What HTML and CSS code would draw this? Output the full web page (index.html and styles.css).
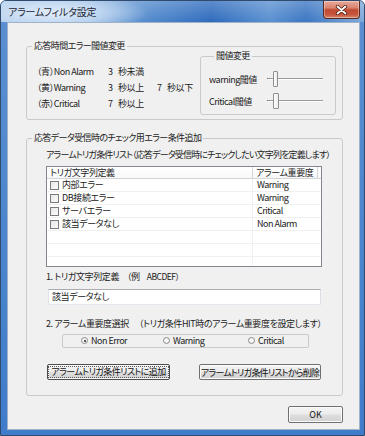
FILE: index.html
```html
<!DOCTYPE html>
<html lang="ja">
<head>
<meta charset="utf-8">
<title>アラームフィルタ設定</title>
<link rel="stylesheet" href="styles.css">
</head>
<body>
<div class="window">
  <div class="titlebar">
    <span class="title">アラームフィルタ設定</span>
    <div class="close">
      <svg width="13" height="10" viewBox="0 0 13 10"><path d="M2.5 1.5 L10.5 8.5 M10.5 1.5 L2.5 8.5" stroke="#4a1c12" stroke-width="3.4" stroke-linecap="round"/><path d="M2.5 1.5 L10.5 8.5 M10.5 1.5 L2.5 8.5" stroke="#ffffff" stroke-width="1.8" stroke-linecap="round"/></svg>
    </div>
  </div>
  <div class="client">
    <fieldset class="grp grp1">
      <legend>応答時間エラー閾値変更</legend>
      <div class="g1body">
        <div class="thresholds">
          <span>（青）<span class="en">Non Alarm</span></span><span>3</span><span>秒未満</span><span></span><span></span>
          <span>（黄）<span class="en">Warning</span></span><span>3</span><span>秒以上</span><span>7</span><span>秒以下</span>
          <span>（赤）<span class="en">Critical</span></span><span>7</span><span>秒以上</span><span></span><span></span>
        </div>
        <fieldset class="grp grp-inner">
          <legend>閾値変更</legend>
          <div class="srow first">
            <span class="slabel"><span class="en">warning</span>閾値</span>
            <div class="slider"><span class="tick"></span><span class="track"></span><span class="thumb"></span></div>
          </div>
          <div class="srow">
            <span class="slabel"><span class="en">Critical</span>閾値</span>
            <div class="slider"><span class="tick wide"></span><span class="track"></span><span class="thumb t2"></span></div>
          </div>
        </fieldset>
      </div>
    </fieldset>

    <fieldset class="grp grp2">
      <legend>応答データ受信時のチェック用エラー条件追加</legend>
      <div class="g2body">
        <div class="line listlabel">アラームトリガ条件リスト（応答データ受信時にチェックしたい文字列を定義します）</div>
        <div class="listview">
          <div class="lhead">
            <span class="hc">トリガ文字列定義</span><span class="hc">アラーム重要度</span><span class="hfill"></span>
          </div>
          <div class="lrow"><span class="c1"><i class="cb"></i>内部エラー</span><span class="c2 en">Warning</span><span></span></div>
          <div class="lrow"><span class="c1"><i class="cb"></i>DB接続エラー</span><span class="c2 en">Warning</span><span></span></div>
          <div class="lrow"><span class="c1"><i class="cb"></i>サーバエラー</span><span class="c2 en">Critical</span><span></span></div>
          <div class="lrow"><span class="c1"><i class="cb"></i>該当データなし</span><span class="c2 en">Non Alarm</span><span></span></div>
          <div class="lrow"><span class="c1"></span><span class="c2"></span><span></span></div>
          <div class="lrow"><span class="c1"></span><span class="c2"></span><span></span></div>
          <div class="lrow"><span class="c1"></span><span class="c2"></span><span></span></div>
        </div>
        <div class="line lbl1">1. トリガ文字列定義<span class="ex1">（例</span><span class="ex2 en">ABCDEF）</span></div>
        <div class="textbox">該当データなし</div>
        <div class="line lbl2">2. アラーム重要度選択<span class="ex3">（トリガ条件HIT時のアラーム重要度を設定します）</span></div>
        <div class="radiobox">
          <label class="radio r1"><i class="rb on"></i><span class="en">Non Error</span></label>
          <label class="radio r2"><i class="rb"></i><span class="en">Warning</span></label>
          <label class="radio r3"><i class="rb"></i><span class="en">Critical</span></label>
        </div>
        <div class="btnrow">
          <button class="btn default"><span class="focus">アラームトリガ条件リストに追加</span></button>
          <button class="btn del">アラームトリガ条件リストから削除</button>
        </div>
      </div>
    </fieldset>

    <div class="okrow"><button class="btn ok">OK</button></div>
  </div>
</div>
</body>
</html>
```

FILE: styles.css
```css
html, body {
  margin: 0;
  padding: 0;
  background: #ffffff;
}
body {
  font-family: "Noto Sans CJK JP", "Liberation Sans", sans-serif;
  font-size: 9px;
  font-feature-settings: "palt";
  letter-spacing: -0.4px;
  color: #222222;
}
.en {
  letter-spacing: -0.5px;
}

.window {
  width: 365px;
  height: 436px;
  box-sizing: border-box;
  border: 1px solid #2f4a6c;
  border-radius: 6px 6px 0 0;
  background: linear-gradient(180deg, #5b90d2 0%, #4a84cd 60%, #3f7cca 100%);
  display: flex;
  flex-direction: column;
  overflow: hidden;
}

.titlebar {
  height: 21px;
  flex: none;
  display: flex;
  justify-content: space-between;
  align-items: flex-start;
  padding-left: 7px;
  background:
    radial-gradient(ellipse 95px 20px at 52px 12px, rgba(228,239,251,0.95) 0%, rgba(205,224,245,0.7) 55%, rgba(205,224,245,0) 100%),
    linear-gradient(180deg, rgba(255,255,255,0.22) 0%, rgba(255,255,255,0) 100%),
    linear-gradient(90deg, #a9c7e9 0%, #8db4e1 22%, #4f87cb 42%, #2f6bbd 58%, #5a90d0 74%, #3c76c3 84%, #7faadb 100%);
}
.title {
  font-size: 10px;
  line-height: 22px;
  color: #1d2633;
  letter-spacing: -0.2px;
}
.close {
  width: 37px;
  height: 18px;
  margin-right: 4px;
  box-sizing: border-box;
  border: 1px solid #5b2a23;
  border-top: none;
  border-radius: 0 0 4px 4px;
  background: linear-gradient(180deg, #e7a99b 0%, #d98571 40%, #c24a33 52%, #c4563d 80%, #d98a6d 100%);
  box-shadow: inset 0 0 0 1px rgba(255,255,255,0.35);
  display: flex;
  align-items: center;
  justify-content: center;
}
.close svg { display: block; }

.client {
  flex: 1;
  margin: 0 4px 5px 6px;
  background: #f0f0f0;
  border: 1px solid #9fb2c7;
  padding: 0 16px 0 18px;
  display: flex;
  flex-direction: column;
}

/* group boxes */
.grp {
  margin: 0;
  padding: 0;
  border: 1px solid #cacaca;
  border-radius: 3px;
  min-width: 0;
}
.grp > legend {
  padding: 0 2px;
  margin-left: 5px;
  line-height: 12px;
  font-size: 9px;
  letter-spacing: -0.6px;
}

.grp1 {
  margin-top: 17px;
  padding-bottom: 4px;
}
.g1body {
  display: flex;
  align-items: flex-start;
  padding-left: 10px;
}
.thresholds {
  display: grid;
  grid-template-columns: 71px 10px 39px 10px auto;
  line-height: 16px;
  margin-top: 12px;
  white-space: nowrap;
}
.grp-inner {
  margin: -2px 6px 0 auto;
  width: 136px;
  box-sizing: border-box;
  padding: 0 0 2px 8px;
}
.srow {
  display: flex;
  align-items: center;
  height: 22px;
}
.srow.first { margin-top: 6px; }
.slabel {
  width: 58px;
  flex: none;
  white-space: nowrap;
}
.slider {
  position: relative;
  width: 56px;
  height: 22px;
}
.track {
  position: absolute;
  left: 1px;
  right: 0;
  top: 10px;
  height: 1px;
  background: #9a9a9a;
  box-shadow: 0 1px 0 #ffffff;
}
.tick {
  position: absolute;
  left: 0;
  top: 10px;
  width: 1px;
  height: 1px;
  background: #6d6d6d;
}
.tick.wide { width: 3px; }
.thumb {
  position: absolute;
  left: 6px;
  top: 3px;
  width: 5px;
  height: 16px;
  box-sizing: border-box;
  border: 1px solid #8e8f8f;
  border-radius: 1px;
  background: linear-gradient(90deg, #fdfdfd 0%, #ececec 100%);
}
.thumb.t2 { left: 6px; width: 6px; }

/* group 2 */
.grp2 {
  margin-top: 12px;
  padding-bottom: 15px;
}
.g2body {
  padding-left: 19px;
}
.line {
  line-height: 12px;
  white-space: nowrap;
}
.listlabel {
  margin-top: 5px;
  letter-spacing: -0.85px;
}
.listview {
  margin-top: 5px;
  width: 276px;
  height: 101px;
  box-sizing: border-box;
  border: 1px solid #828790;
  background: #ffffff;
  overflow: hidden;
}
.lhead, .lrow {
  display: grid;
  grid-template-columns: 206px 65px 1fr;
}
.lhead {
  background: linear-gradient(180deg, #ffffff 0%, #f6f7f8 100%);
}
.hc {
  line-height: 11px;
  height: 11px;
  padding-left: 3px;
  border-right: 1px solid #d5d5d5;
  border-bottom: 1px solid #d5d5d5;
  white-space: nowrap;
}
.hfill {
  border-bottom: 1px solid #d5d5d5;
}
.lrow {
  height: 13px;
  box-sizing: border-box;
  border-bottom: 1px solid #f0f0f0;
  line-height: 12px;
}
.c1 {
  border-right: 1px solid #f0f0f0;
  padding-left: 3px;
  display: flex;
  align-items: center;
  white-space: nowrap;
}
.c2 {
  padding-left: 4px;
  white-space: nowrap;
}
.cb {
  width: 9px;
  height: 9px;
  box-sizing: border-box;
  border: 1px solid #7b7b7b;
  background: linear-gradient(135deg, #e8e8e8 0%, #fbfbfb 100%);
  margin-right: 3px;
  flex: none;
}

.lbl1 {
  margin-top: 3px;
}
.ex1 { margin-left: 8px; }
.ex2 { margin-left: 7px; font-size: 8.5px; }
.textbox {
  margin: 6px 0 0 2px;
  width: 273px;
  height: 16px;
  box-sizing: border-box;
  border: 1px solid #abadb3;
  border-color: #abadb3 #dbdfe6 #e3e9ef #e2e3ea;
  background: #ffffff;
  line-height: 14px;
  padding-left: 3px;
}
.lbl2 {
  margin-top: 13px;
}
.ex3 { margin-left: 10px; }

.radiobox {
  margin: 4px 0 0 16px;
  width: 247px;
  height: 14px;
  box-sizing: border-box;
  border: 1px solid #cacaca;
  border-radius: 2px;
  display: flex;
  align-items: flex-start;
  padding-left: 18px;
}
.radio {
  display: flex;
  align-items: center;
  line-height: 9px;
  height: 9px;
  margin-top: 1px;
  white-space: nowrap;
}
.r1 { width: 82px; }
.r2 { width: 85px; }
.rb {
  width: 7px;
  height: 7px;
  box-sizing: border-box;
  border: 1px solid #8c8c8c;
  border-radius: 50%;
  background: radial-gradient(circle, #ffffff 0%, #e6e6e6 100%);
  margin-right: 3px;
  position: relative;
}
.rb.on::after {
  content: "";
  position: absolute;
  left: 1.5px;
  top: 1.5px;
  width: 2px;
  height: 2px;
  border-radius: 50%;
  background: #222;
}

.btnrow {
  display: flex;
  margin-top: 16px;
}
.btn {
  font-family: "Noto Sans CJK JP", "Liberation Sans", sans-serif;
  font-size: 9px;
  font-feature-settings: "palt";
  color: #111;
  height: 16px;
  box-sizing: border-box;
  padding: 0;
  border: 1px solid #707070;
  border-radius: 2px;
  background: linear-gradient(180deg, #f4f4f4 0%, #ececec 48%, #dedede 52%, #d2d2d2 100%);
  box-shadow: inset 0 0 0 1px #fbfbfb;
  line-height: 13px;
  display: flex;
  align-items: center;
  justify-content: center;
  letter-spacing: -0.6px;
  white-space: nowrap;
}
.btn.default {
  margin-left: 1px;
  width: 123px;
  border-color: #4c4c4c;
}
.focus {
  display: block;
  outline: 1px dotted #555;
  outline-offset: 0;
  padding: 0 2px;
  line-height: 10px;
}
.btn.del {
  margin-left: 29px;
  width: 122px;
  letter-spacing: -0.8px;
}
.okrow {
  display: flex;
  justify-content: flex-end;
  margin-top: 10px;
}
.btn.ok {
  width: 55px;
  height: 17px;
  font-size: 9px;
  letter-spacing: 0;
}
```
